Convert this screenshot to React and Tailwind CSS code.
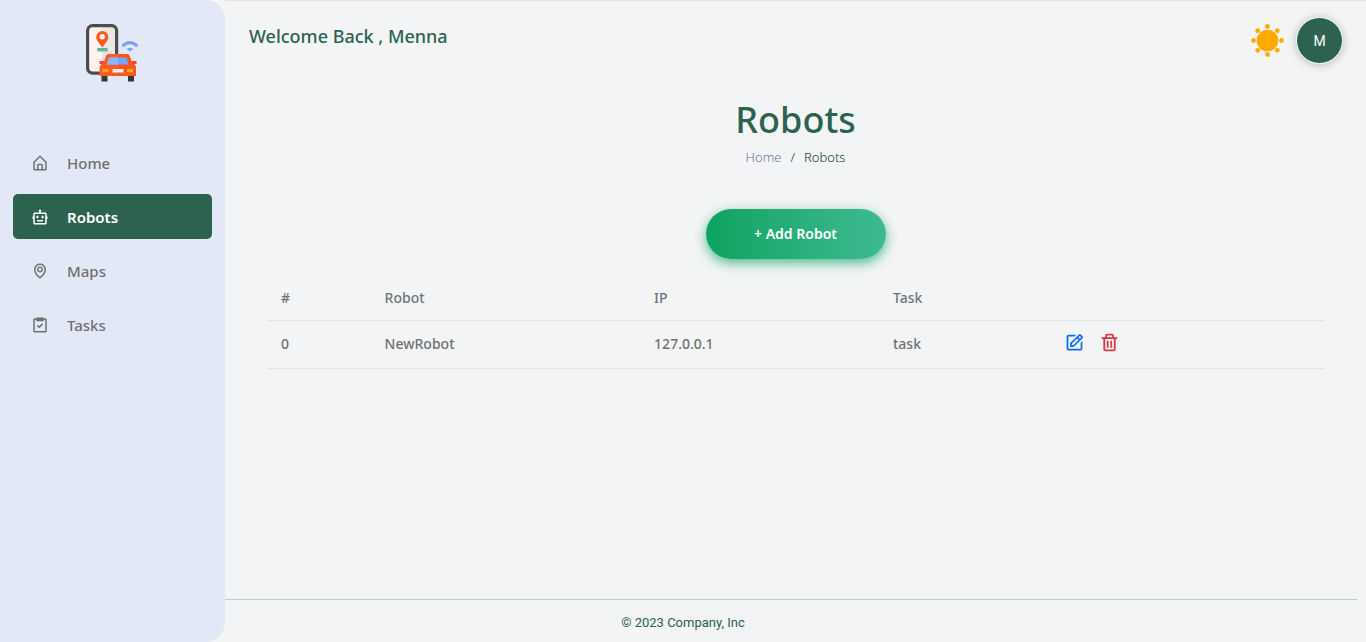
import React from "react";
import { BiHomeAlt, BiBot, BiMap, BiTask, BiEdit, BiTrash } from "react-icons/bi";

const links = [
  { label: "Home", icon: BiHomeAlt },
  { label: "Robots", icon: BiBot, active: true },
  { label: "Maps", icon: BiMap },
  { label: "Tasks", icon: BiTask },
];

const robots = [{ id: 0, name: "NewRobot", ip: "127.0.0.1", task: "task" }];

function Logo() {
  return (
    <svg viewBox="0 0 54 60" className="h-15 w-[54px]" role="img" aria-label="Robot tracker">
      <rect x="1.6" y="2.6" width="29" height="47.5" rx="5" fill="#fff3f2" />
      <path d="M16 2.6h9.6a5 5 0 0 1 5 5v42.5H16z" fill="#ebe6e1" />
      <rect x="1.6" y="2.6" width="29" height="47.5" rx="5" fill="none" stroke="#4a4d4e" strokeWidth="3.2" />
      <path d="M16.3 24.5C14 21 10.2 17.7 10.2 14a6.1 6.1 0 0 1 12.2 0c0 3.7-3.8 7-6.1 10.5z" fill="#ff5a22" />
      <circle cx="16.3" cy="13.8" r="2.7" fill="#fff3f2" />
      <rect x="11.2" y="25" width="10.4" height="3.4" fill="#5fb79b" />
      <path d="M36.4 23.2c4.8-4.6 10.2-4.6 15 0" fill="none" stroke="#7ba4fb" strokeWidth="3.2" />
      <path d="M40.5 26q3.4-2.4 6.800 0L43.900 28.400z" fill="#7ba4fb" />
      <rect x="15.500" y="52" width="6" height="6.500" fill="#363738" />
      <rect x="42" y="52" width="6" height="6.500" fill="#363738" />
      <path d="M13.500 38h5v3h-5zM45.500 38h5v3h-5z" fill="#f5403c" />
      <path d="M22.500 31h18.500q2 0 2.600 2l2.400 7 2.500 1.500q1.500 1.500 1.500 4V53H13.500v-7.500q0-2.500 1.500-4L17.500 40l2.400-7q.6-2 2.600-2z" fill="#ff5a22" />
      <path d="M32 31h9q2 0 2.600 2l2.400 7 2.500 1.500q1.500 1.500 1.500 4V53H32z" fill="#f9551f" />
      <path d="M24 34.500h15.500q1 0 1.300 1l1.700 6H21l1.700-6q.3-1 1.300-1z" fill="#75a5ff" />
      <path d="M24 34.500h8v7H21l1.700-6q.3-1 1.300-1z" fill="#8db5ff" />
      <rect x="26.500" y="46" width="11" height="3.500" fill="#fff1ed" />
      <rect x="16.500" y="46" width="6" height="3.300" rx="1" fill="#ffad16" />
      <rect x="41" y="46" width="6" height="3.300" rx="1" fill="#ffad16" />
    </svg>
  );
}

function Sun() {
  return (
    <svg viewBox="0 0 34 34" className="size-[34px]" fill="#ffaa00" aria-hidden="true">
      <circle cx="17.5" cy="16.5" r="10.8" />
      <circle cx="17.5" cy="2.5" r="2.4" />
      <circle cx="17.5" cy="30.5" r="2.4" />
      <circle cx="3.5" cy="16.5" r="2.4" />
      <circle cx="31.5" cy="16.5" r="2.4" />
      <circle cx="7.7" cy="6.7" r="2.4" />
      <circle cx="27.3" cy="6.7" r="2.4" />
      <circle cx="7.7" cy="26.3" r="2.4" />
      <circle cx="27.3" cy="26.3" r="2.4" />
    </svg>
  );
}

export default function App() {
  return (
    <div className="flex min-h-screen bg-[#f3f4f6] font-['Noto_Sans',sans-serif] text-[#2d6250]">
      <aside className="flex w-[225px] shrink-0 flex-col rounded-r-[20px] border-t border-[#e1e3e6] bg-[#e3e8f7] px-[13px] pt-[22px]">
        <a href="#home" className="ml-[73px] w-fit">
          <Logo />
        </a>
        <nav className="mt-[57px] flex flex-col gap-[9px]">
          {links.map(({ label, icon: Icon, active }) => (
            <a
              key={label}
              href={"#" + label.toLowerCase()}
              aria-current={active ? "page" : undefined}
              className={
                active
                  ? "flex h-[45px] items-center gap-[18px] rounded-[5px] bg-[#2d6250] pt-px pl-[18px] text-[15px] font-semibold text-white"
                  : "flex h-[45px] items-center gap-[18px] rounded-[5px] pt-px pl-[18px] text-[15px] font-medium text-[#707070]"
              }
            >
              <Icon className="size-[18px]" />
              {label}
            </a>
          ))}
        </nav>
      </aside>

      <div className="flex min-w-0 flex-1 flex-col border-t border-[#e1e3e6]">
        <header className="flex items-start justify-between pt-4 pr-[23px] pl-6">
          <p className="pt-[5px] text-lg leading-7 font-medium">Welcome Back , Menna</p>
          <div className="flex items-center gap-3">
            <button type="button" aria-label="Toggle theme">
              <Sun />
            </button>
            <button
              type="button"
              aria-label="Account"
              className="size-[47px] rounded-full border border-white bg-[#2d6250] font-['Roboto',sans-serif] text-sm text-white shadow-[0_1px_8px_rgba(0,0,0,0.25)]"
            >
              M
            </button>
          </div>
        </header>

        <main className="flex flex-1 flex-col items-center px-[42px] pt-[33px]">
          <h1 className="text-4xl leading-[46px] font-medium">Robots</h1>
          <nav aria-label="Breadcrumb" className="mt-1 flex gap-[9px] text-[13px] leading-5 font-light">
            <a href="#home" className="text-[#74769c]">Home</a>
            <span aria-hidden="true" className="text-[#12402f]">/</span>
            <span className="text-[#12402f]">Robots</span>
          </nav>
          <button
            type="button"
            className="mt-[42px] h-[50px] w-[180px] rounded-full bg-linear-to-r from-[#0ba360] to-[#3cba92] text-sm font-semibold text-white shadow-[0_4px_12px_rgba(23,168,108,0.75)]"
          >
            + Add Robot
          </button>

          <table className="mt-4 w-full table-fixed text-left text-sm">
            <colgroup>
              <col className="w-[9.8%]" />
              <col className="w-[25.5%]" />
              <col className="w-[22.6%]" />
              <col className="w-[16.4%]" />
              <col className="w-[25.7%]" />
            </colgroup>
            <thead className="text-[#6c757d]">
              <tr className="h-[45px] border-b border-[#e2e4e7]">
                <th scope="col" className="px-[14px] pt-[2px] font-medium">#</th>
                <th scope="col" className="px-[14px] pt-[2px] font-medium">Robot</th>
                <th scope="col" className="px-[14px] pt-[2px] font-medium">IP</th>
                <th scope="col" className="px-[14px] pt-[2px] font-medium">Task</th>
                <th scope="col" aria-label="Actions"></th>
              </tr>
            </thead>
            <tbody className="text-[#707070]">
              {robots.map((robot) => (
                <tr key={robot.id} className="h-12 border-b border-[#e2e4e7] font-medium">
                  <td className="px-[14px]">{robot.id}</td>
                  <td className="px-[14px]">{robot.name}</td>
                  <td className="px-[14px]">{robot.ip}</td>
                  <td className="px-[14px]">{robot.task}</td>
                  <td className="px-3 pb-1">
                    <div className="flex gap-[14px]">
                      <button type="button" aria-label="Edit robot" className="text-[#0d6efd]">
                        <BiEdit className="size-[21px]" />
                      </button>
                      <button type="button" aria-label="Delete robot" className="text-[#dc3545]">
                        <BiTrash className="size-[21px]" />
                      </button>
                    </div>
                  </td>
                </tr>
              ))}
            </tbody>
          </table>
        </main>

        <footer className="mr-[9px] border-t border-[#c0cccb] pt-[13px] pr-[216px] pb-[9px] text-center font-['Roboto',sans-serif] text-[13px] leading-5">
          © 2023 Company, Inc
        </footer>
      </div>
    </div>
  );
}
